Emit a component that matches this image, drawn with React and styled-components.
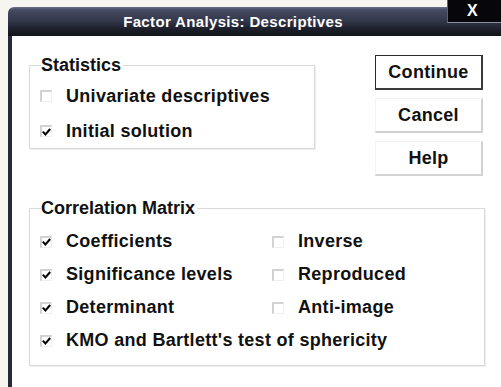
import React from 'react';
import styled, { createGlobalStyle } from 'styled-components';

const GlobalStyle = createGlobalStyle`
    html, body {
        margin: 0;
        padding: 0;
        overflow: hidden;
        background: #f7f5ef;
        font-family: "Liberation Sans", Arial, sans-serif;
    }
`;

const Window = styled.div`
    position: relative;
    margin: 7px 0 0 8px;
    width: 493px;
    height: 380px;
    display: flex;
    flex-direction: column;
`;

const TitleBar = styled.div`
    height: 29px;
    display: flex;
    align-items: center;
    justify-content: center;
    padding-right: 43px;
    border-top-left-radius: 6px;
    background: linear-gradient(#6c728a 0px, #444a62 3px, #33374b 14px, #1d1f2b 22px, #121318 29px);
    color: #ffffff;
    font-weight: bold;
    font-size: 15px;
    letter-spacing: 0.35px;
`;

const CloseButton = styled.div`
    position: absolute;
    left: 439px;
    top: -7px;
    width: 70px;
    height: 23px;
    box-sizing: border-box;
    background: #07070b;
    border-left: 1px solid #5b6072;
    border-bottom: 1px solid #8a8f9e;
    color: #ffffff;
    font-weight: bold;
    font-size: 16px;
    line-height: 22px;
    padding-left: 19px;
`;

const Body = styled.div`
    flex: 1;
    background: #ffffff;
    border-left: 4px solid #262938;
    padding: 19px 0 0 17px;
    display: grid;
    grid-template-columns: 286px 108px;
    column-gap: 60px;
    row-gap: 22px;
    align-content: start;
    align-items: start;
    color: #111111;
`;

const Group = styled.fieldset`
    margin: 0;
    padding: ${p => p.$pad};
    border: 1px solid #d9d9d9;
    box-shadow: 1px 1px 0 #efefef;
    min-width: 0;
    box-sizing: border-box;
    grid-column: ${p => (p.$wide ? '1 / -1' : 'auto')};
    width: ${p => p.$width}px;
`;

const Legend = styled.legend`
    margin-left: 1px;
    padding: 0 2px 0 0;
    font-weight: bold;
    font-size: 18px;
    line-height: 20px;
`;

const Options = styled.div`
    display: grid;
    grid-template-columns: ${p => p.$cols};
`;

const Row = styled.div`
    height: ${p => p.$h}px;
    display: flex;
    align-items: center;
    grid-column: ${p => (p.$span ? '1 / -1' : 'auto')};
    font-weight: bold;
    font-size: 18px;
    letter-spacing: 0.3px;
    white-space: nowrap;
`;

const Box = styled.span`
    width: 12px;
    height: 12px;
    box-sizing: border-box;
    border-top: 2px solid #d2d2d2;
    border-left: 2px solid #d2d2d2;
    border-right: 1px solid #efefef;
    border-bottom: 1px solid #efefef;
    background: #ffffff;
    margin-right: 14px;
    display: flex;
    align-items: center;
    justify-content: center;
    flex-shrink: 0;
`;

const Buttons = styled.div`
    display: flex;
    flex-direction: column;
    gap: 8px;
`;

const Button = styled.button`
    height: 35px;
    width: 108px;
    padding: 0;
    box-sizing: border-box;
    background: #ffffff;
    font-family: "Liberation Sans", Arial, sans-serif;
    font-weight: bold;
    font-size: 18px;
    letter-spacing: 0.3px;
    color: #111111;
    border: ${p => (p.$default ? '1px solid #2a2a2a' : '1px solid #f3f3f3')};
    border-right: ${p => (p.$default ? '2px solid #3a3a3a' : '2px solid #d2d2d2')};
    border-bottom: ${p => (p.$default ? '2px solid #3a3a3a' : '2px solid #d2d2d2')};
`;

const Check = ({ on }) => (
    <Box>
        {on && (
            <svg width="9" height="8" viewBox="0 0 9 8">
                <path d="M0.8 3.6 L3.4 6.4 L8.2 1" fill="none" stroke="#000" strokeWidth="2" />
            </svg>
        )}
    </Box>
);

const Option = ({ on, label, h, span }) => (
    <Row $h={h} $span={span}>
        <Check on={on} />
        {label}
    </Row>
);

const App = () => {
    return (
        <>
            <GlobalStyle />
            <Window>
                <TitleBar>Factor Analysis: Descriptives</TitleBar>
                <CloseButton>X</CloseButton>
                <Body>
                    <Group $width={286} $pad="3px 0 0 10px">
                        <Legend>Statistics</Legend>
                        <Options $cols="1fr">
                            <Option h={36} label="Univariate descriptives" />
                            <Option h={34} on label="Initial solution" />
                        </Options>
                    </Group>
                    <Buttons>
                        <Button $default>Continue</Button>
                        <Button>Cancel</Button>
                        <Button>Help</Button>
                    </Buttons>
                    <Group $wide $width={456} $pad="7px 0 8px 10px">
                        <Legend>Correlation Matrix</Legend>
                        <Options $cols="232px 1fr">
                            <Option h={33} on label="Coefficients" />
                            <Option h={33} label="Inverse" />
                            <Option h={33} on label="Significance levels" />
                            <Option h={33} label="Reproduced" />
                            <Option h={33} on label="Determinant" />
                            <Option h={33} label="Anti-image" />
                            <Option h={33} on span label="KMO and Bartlett's test of sphericity" />
                        </Options>
                    </Group>
                </Body>
            </Window>
        </>
    );
};

export default App;
